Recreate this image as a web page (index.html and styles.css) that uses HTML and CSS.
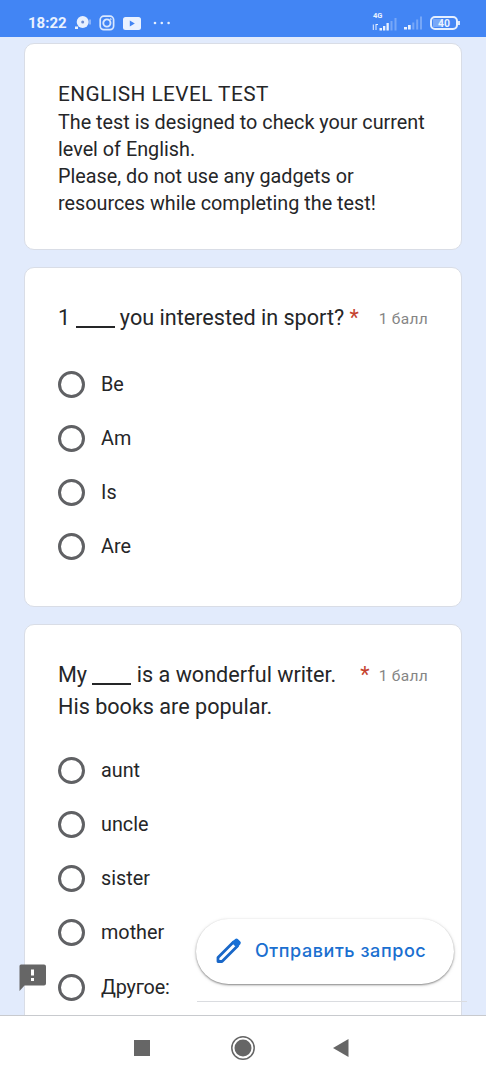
FILE: index.html
```html
<!DOCTYPE html>
<html lang="ru">
<head>
<meta charset="utf-8">
<title>English level test</title>
<link rel="stylesheet" href="styles.css">
</head>
<body>
<div class="screen">
  <header class="status">
    <span class="clock">18:22</span>
    <svg class="chat" width="17" height="16" viewBox="0 0 17 16"><circle cx="7.700" cy="7" r="6" fill="#e8f0fe"/><path d="M0 11.500h3V14H0z" fill="#e8f0fe"/><circle cx="7.700" cy="7" r="1.500" fill="#6c8bd0"/><path d="M15 4.500v5" stroke="#a9c7fb" stroke-width="1.400"/></svg>
    <svg class="insta" width="16" height="16" viewBox="0 0 16 16" fill="none" stroke="#d9e8ff"><rect x="1.200" y="1.200" width="13.400" height="13.400" rx="3.600" stroke-width="1.700"/><circle cx="7.900" cy="8" r="3.600" stroke-width="1.900"/><circle cx="11.700" cy="4.200" r=".6"/></svg>
    <svg class="tube" width="18" height="13" viewBox="0 0 18 13"><rect width="18" height="13" rx="2.500" fill="#eaf2ff"/><path d="M6.800 3.500v6l5-3z" fill="#4285f4"/></svg>
    <svg class="dots" width="18" height="4" viewBox="0 0 18 4" fill="#e5efff"><circle cx="2" cy="2" r="1.300"/><circle cx="8.800" cy="2" r="1.300"/><circle cx="15.600" cy="2" r="1.300"/></svg>
    <span class="network">
      <span class="generation">4G</span>
      <svg width="26" height="13" viewBox="0 0 26 13"><path d="M.8 6.500h1V12h-1zM3.500 6h1v6h-1zM4.500 6h1.500v1H4.500zM7.500 10h2.500v2.500H7.500zM11 8h2.300v4.500H11zM14.500 5h2.300v7.500h-2.300z" fill="#e8f1ff"/><path d="M18.500 3h2v9.500h-2zM22.500 0h2v12.500h-2z" fill="#77a7f7"/></svg>
    </span>
    <svg class="signal" width="20" height="14" viewBox="0 0 20 14"><path d="M0 11h3v2.500H0zM4 9h2.700v4.500H4z" fill="#e8f1ff"/><path d="M8.300 6.500h2v7h-2zM12.200 3.500h2v10h-2zM16 .5h2v13h-2z" fill="#77a7f7"/></svg>
    <span class="battery"><span>40</span></span>
  </header>

  <main class="form">
    <section class="card intro">
      <h1>ENGLISH LEVEL TEST</h1>
      <p>The test is designed to check your current</p>
      <p>level of English.</p>
      <p>Please, do not use any gadgets or</p>
      <p>resources while completing the test!</p>
    </section>

    <section class="card">
      <div class="question">
        <h2>1 <i class="blank"></i> you interested in sport? <b>*</b></h2>
        <span class="points">1 балл</span>
      </div>
      <div class="options">
        <label><i class="radio"></i>Be</label>
        <label><i class="radio"></i>Am</label>
        <label><i class="radio"></i>Is</label>
        <label><i class="radio"></i>Are</label>
      </div>
    </section>

    <section class="card last">
      <div class="question">
        <h2>My <i class="blank"></i> is a wonderful writer.<br>His books are popular.</h2>
        <b>*</b>
        <span class="points">1 балл</span>
      </div>
      <div class="options">
        <label><i class="radio"></i>aunt</label>
        <label><i class="radio"></i>uncle</label>
        <label><i class="radio"></i>sister</label>
        <label><i class="radio"></i>mother</label>
        <label class="other"><i class="radio"></i><span>Другое:</span><i class="field"></i></label>
      </div>
    </section>
  </main>

  <svg class="report" width="28" height="28" viewBox="0 0 28 28"><path d="M2 .5h23q2 0 2 2v17q0 2-2 2H5.500L.5 27V2q0-1.500 1.500-1.500z" fill="#666"/><path d="M12 5.500h3v6h-3zM12 14h3v3h-3z" fill="#fff"/></svg>
  <button class="access">
    <svg width="26" height="26" viewBox="0 0 26 26"><path d="M2 23.500v-4L17.500 4l4 4L6 23.500z" fill="none" stroke="#1967c8" stroke-width="2.800" stroke-linejoin="round"/><path d="M15.500 4.500l3.700-3.400q1.300-1 2.600 0l2.500 2.500q1.200 1.300 0 2.600L21 10z" fill="#1870d6"/></svg>
    <span>Отправить запрос</span>
  </button>

  <nav class="system">
    <svg width="16" height="16" viewBox="0 0 16 16"><path d="M0 0h16v16H0z" fill="#666"/></svg>
    <svg width="24" height="24" viewBox="0 0 24 24"><circle cx="12" cy="12" r="11.200" fill="none" stroke="#666" stroke-width="1.500"/><circle cx="12" cy="12" r="8.500" fill="#666"/></svg>
    <svg width="16" height="18" viewBox="0 0 16 18"><path d="M0 9 15.500 0v18z" fill="#666"/></svg>
  </nav>
</div>
</body>
</html>
```
FILE: styles.css
```css
* { box-sizing: border-box; }
body { margin: 0; font-family: Roboto, sans-serif; color: #252628; }
h1, h2, p { margin: 0; font-weight: 400; white-space: nowrap; }
svg { display: block; flex: none; }

.screen {
  position: relative;
  width: 486px;
  height: 1080px;
  overflow: hidden;
  display: flex;
  flex-direction: column;
  background: #e2ebfc;
}

.status {
  flex: none;
  display: flex;
  align-items: center;
  height: 37px;
  padding: 9px 25px 0 28px;
  background: #4285f4;
  color: #eaf2ff;
}
.clock { width: 47px; font-size: 15px; font-weight: 700; line-height: 20px; }
.insta { margin-left: 7px; }
.tube { margin-left: 8px; }
.dots { margin-left: 12px; }
.network { display: flex; flex-direction: column; margin-left: 201px; margin-top: -3px; }
.generation { height: 6px; padding-left: 1px; font-size: 7.500px; line-height: 7px; font-weight: 700; }
.signal { margin-left: 6px; }
.battery {
  position: relative;
  display: flex;
  width: 28px;
  height: 14px;
  margin-left: 6px;
  padding: 1px;
  border: 2px solid #e5efff;
  border-radius: 5px;
}
.battery span {
  flex: 1;
  font-size: 10.500px;
  line-height: 9px;
  font-weight: 700;
  text-align: center;
  background: linear-gradient(90deg, #78a8f8 40%, transparent 40%);
}
.battery::after {
  content: "";
  position: absolute;
  right: -4px;
  top: 3px;
  width: 2px;
  height: 4px;
  background: #d5e5ff;
}

.form {
  flex: 1;
  min-height: 0;
  overflow: hidden;
  display: flex;
  flex-direction: column;
  gap: 17px;
  padding: 6px 24px 0;
}
.card {
  flex: none;
  width: 438px;
  height: 340px;
  padding: 34px 33px 0;
  background: #fff;
  border: 1px solid #d9dde6;
  border-radius: 10px;
}
.intro { height: 207px; padding-top: 35px; font-size: 19.800px; line-height: 27px; }
.intro h1 { font-size: 20.800px; line-height: 30px; letter-spacing: .43px; }
.last { height: 500px; border-radius: 10px 10px 0 0; }

.question { display: flex; }
.question h2 { font-size: 21.600px; line-height: 32px; }
.question b { color: #c5432f; font-size: 21.600px; font-weight: 400; line-height: 32px; }
.last .question b { margin-left: 24px; }
.blank { display: inline-block; width: 39px; height: 2px; background: #252628; vertical-align: -3px; }
.points { margin-left: auto; font-size: 15.500px; line-height: 34px; letter-spacing: .3px; color: #858585; white-space: nowrap; }

.options { padding-top: 21px; }
.last .options { padding-top: 20px; }
.options label { display: flex; align-items: center; height: 54px; font-size: 19.800px; }
.options .other { height: 57px; }
.other span { width: 69px; white-space: nowrap; letter-spacing: -.2px; }
.radio { flex: none; width: 27px; height: 27px; margin-right: 16px; border: 3px solid #606164; border-radius: 50%; }
.field { flex: none; align-self: flex-end; width: 270px; height: 1px; margin: 0 0 14px 27px; background: #dadce0; }

.report { position: absolute; left: 19px; top: 964px; }
.access {
  position: absolute;
  left: 196px;
  top: 919px;
  width: 258px;
  height: 65px;
  display: flex;
  align-items: center;
  gap: 13px;
  padding: 0 0 2px 20px;
  border: 0;
  border-radius: 33px;
  background: #fff;
  box-shadow: 0 1px 2px rgba(0, 0, 0, .42), 0 1px 4px rgba(0, 0, 0, .12);
  font: 500 18px Inter, sans-serif;
  letter-spacing: .56px;
  color: #1a6fd0;
  white-space: nowrap;
}

.system {
  flex: none;
  display: flex;
  align-items: center;
  height: 65px;
  padding-left: 134px;
  background: #fff;
  border-top: 1px solid #c8cace;
}
.system svg:nth-child(2) { margin-left: 81px; }
.system svg:nth-child(3) { margin-left: 78px; }
```
